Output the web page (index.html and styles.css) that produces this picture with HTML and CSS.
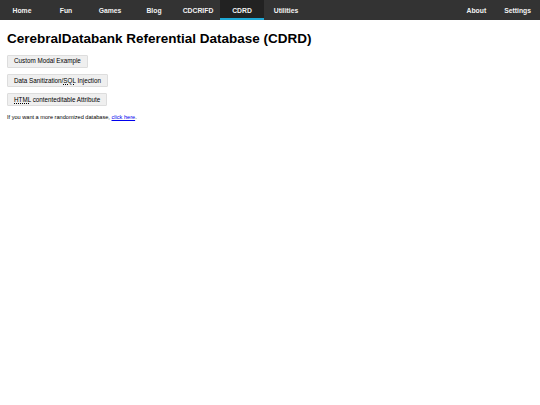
FILE: index.html
```html
<!DOCTYPE html>
<html>
<head>
<meta charset="utf-8">
<link rel="stylesheet" href="styles.css">
</head>
<body>
<nav class="topnav">
  <div class="nav-left">
    <a class="nav-item" href="#">Home</a>
    <a class="nav-item" href="#">Fun</a>
    <a class="nav-item" href="#">Games</a>
    <a class="nav-item" href="#">Blog</a>
    <a class="nav-item" href="#">CDCRIFD</a>
    <a class="nav-item active" href="#">CDRD</a>
    <a class="nav-item" href="#">Utilities</a>
  </div>
  <div class="nav-right">
    <a class="nav-item pad" href="#">About</a>
    <a class="nav-item pad" href="#">Settings</a>
  </div>
</nav>
<main class="content">
  <h1 class="title">CerebralDatabank Referential Database (CDRD)</h1>
  <div class="buttons">
    <button class="btn">Custom Modal Example</button>
    <button class="btn">Data Sanitization/<abbr>SQL</abbr> Injection</button>
    <button class="btn"><abbr>HTML</abbr> contenteditable Attribute</button>
  </div>
  <p class="note">If you want a more randomized database, <a href="#">click here</a>.</p>
</main>
</body>
</html>
```

FILE: styles.css
```css
html, body {
  margin: 0;
  padding: 0;
  background: #fff;
  font-family: "Liberation Sans", Arial, sans-serif;
}
.topnav {
  display: flex;
  justify-content: space-between;
  background: #333;
  height: 20px;
}
.nav-left, .nav-right {
  display: flex;
}
.nav-item {
  display: flex;
  align-items: center;
  justify-content: center;
  width: 44px;
  height: 20px;
  box-sizing: border-box;
  color: #f2f2f2;
  text-decoration: none;
  font-size: 6.8px;
  font-weight: bold;
}
.nav-item.pad {
  width: auto;
  padding: 0 9px;
}
.nav-item.active {
  background: #222;
  border-bottom: 2px solid #1fa9d6;
  padding-top: 2px;
}
.content {
  padding: 0 7px;
}
.title {
  margin: 11px 0 0;
  font-size: 13.5px;
  line-height: 16px;
  font-weight: bold;
  color: #000;
}
.buttons {
  display: flex;
  flex-direction: column;
  align-items: flex-start;
  gap: 6.5px;
  margin-top: 8px;
}
.btn {
  font-family: "Liberation Sans", Arial, sans-serif;
  font-size: 6.3px;
  height: 12.7px;
  padding: 0 6px;
  background: #efefef;
  border: 1px solid #ddd;
  border-radius: 1px;
  color: #000;
  line-height: 10px;
}
.btn abbr {
  text-decoration: underline dotted;
}
.note {
  margin: 7.5px 0 0;
  font-size: 5.6px;
  line-height: 7px;
  color: #000;
}
.note a {
  color: #00e;
  text-decoration: underline;
}
```
